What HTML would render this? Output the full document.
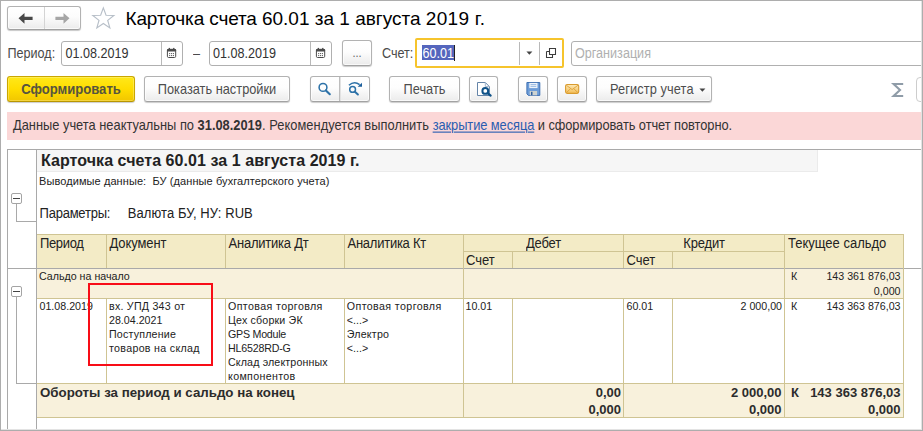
<!DOCTYPE html>
<html lang="ru">
<head>
<meta charset="utf-8">
<title>Карточка счета 60.01</title>
<style>
*{box-sizing:border-box;margin:0;padding:0}
html,body{width:923px;height:431px;overflow:hidden;background:#fff}
body{position:relative;font-family:"Liberation Sans",sans-serif;color:#333;font-size:13px}
.a{position:absolute;white-space:pre}
.frame{position:absolute;left:0;top:0;width:923px;height:431px;border:1px solid #adadad;pointer-events:none;z-index:50}
/* buttons */
.btn{position:absolute;height:26px;top:76px;border:1px solid #b2b2b2;border-bottom-color:#a2a2a2;border-radius:3px;background:linear-gradient(#ffffff 0%,#fdfdfd 45%,#ebebeb 100%);box-shadow:0 1px 1px rgba(0,0,0,.20),inset 0 0 0 1px rgba(255,255,255,.7);color:#4d4d4d;font-size:12.8px;text-align:center;line-height:25px;white-space:pre}
.btn.y{background:linear-gradient(#ffe81a 0%,#ffdd00 50%,#f1c600 100%);border-color:#caa700;border-bottom-color:#b89600;color:#56543f;font-weight:bold;font-size:13.1px;box-shadow:0 1px 1px rgba(0,0,0,.20),inset 0 0 0 1px rgba(255,255,255,.25)}
.inp{position:absolute;top:41px;height:25px;border:1px solid #b0b0b0;border-radius:3px;background:#fff}
.lbl{position:absolute;font-size:12.6px;color:#4a4a4a;line-height:16px;white-space:pre;transform:scaleY(1.12);transform-origin:0 12.4px}
.vd{position:absolute;width:1px;background:#b9b9b9}
/* sheet */
.t8{position:absolute;font-size:10.67px;line-height:14px;color:#222;white-space:pre}
.t10{position:absolute;font-size:13px;line-height:16px;color:#222;white-space:pre;transform:scaleY(1.1);transform-origin:0 12.5px}
.t10.b{transform:none}
.hl{position:absolute;height:1px;background:#cfc493}
.vl{position:absolute;width:1px;background:#cfc493}
.gl{position:absolute;background:#a9a9a9}
.bt{display:inline-block;line-height:25px;transform:scaleY(1.12);transform-origin:50% 16.9px}
</style>
</head>
<body>
<!-- ===== header / nav ===== -->
<div class="a" style="left:7px;top:6px;width:74px;height:24px;border:1px solid #b2b2b2;border-bottom-color:#a0a0a0;border-radius:3px;background:linear-gradient(#fff,#fcfcfc 45%,#ebebeb);box-shadow:0 1px 1px rgba(0,0,0,.22),inset 0 0 0 1px rgba(255,255,255,.7)"></div>
<div class="vd" style="left:44px;top:7px;height:22px;background:#d4d4d4"></div>
<svg class="a" style="left:17px;top:11px" width="18" height="14" viewBox="0 0 18 14"><path d="M1.5 7.3 L7.5 1.9 L7.5 5.7 L15.6 5.7 L15.6 8.9 L7.5 8.9 L7.5 12.7 Z" fill="#484848"/></svg>
<svg class="a" style="left:53px;top:11px" width="18" height="14" viewBox="0 0 18 14"><path d="M16.5 7.3 L10.5 1.9 L10.5 5.7 L2.4 5.7 L2.4 8.9 L10.5 8.9 L10.5 12.7 Z" fill="#a6a6a6"/></svg>
<svg class="a" style="left:88px;top:4px" width="30" height="28" viewBox="88 4 30 28"><path d="M103.35 7.90 L106.05 15.23 L113.86 15.54 L107.72 20.37 L109.85 27.89 L103.35 23.55 L96.85 27.89 L98.98 20.37 L92.84 15.54 L100.65 15.23 Z" fill="#fff" stroke="#b7bfc8" stroke-width="1.15" stroke-linejoin="miter"/></svg>
<div class="a" id="title" style="left:125.5px;top:7px;font-size:19px;line-height:24px;color:#000"><span style="letter-spacing:-.13px">Карточка счета </span>60.01 за 1 августа <span style="letter-spacing:.28px">2019 г.</span></div>

<!-- ===== row 2 : period / account ===== -->
<div class="lbl" style="left:7.5px;top:46px">Период:</div>
<div class="inp" style="left:61px;width:122px"></div>
<div class="vd" style="left:161px;top:42px;height:23px"></div>
<div class="lbl" style="left:65.4px;top:46px;color:#333">01.08.2019</div>
<svg class="a cal" style="left:164px;top:45px" width="16" height="16" viewBox="164 45 16 16"><rect x="167.4" y="49.3" width="8.3" height="8.2" rx="1.2" fill="#fff" stroke="#4c4c4c" stroke-width="1"/><rect x="167" y="48.9" width="9.1" height="2.7" rx="0.8" fill="#4c4c4c"/><rect x="168.7" y="47.9" width="1.3" height="1.6" fill="#4c4c4c"/><rect x="173.1" y="47.9" width="1.3" height="1.6" fill="#4c4c4c"/><g fill="#666"><rect x="169.1" y="53" width="1.1" height="1.1"/><rect x="171" y="53" width="1.1" height="1.1"/><rect x="172.9" y="53" width="1.1" height="1.1"/><rect x="169.1" y="55" width="1.1" height="1.1"/><rect x="171" y="55" width="1.1" height="1.1"/><rect x="172.9" y="55" width="1.1" height="1.1"/></g></svg>
<div class="lbl" style="left:193px;top:46px">–</div>
<div class="inp" style="left:209px;width:123px"></div>
<div class="vd" style="left:310px;top:42px;height:23px"></div>
<div class="lbl" style="left:213px;top:46px;color:#333">01.08.2019</div>
<svg class="a cal" style="left:313px;top:45px" width="16" height="16" viewBox="164 45 16 16"><rect x="167.4" y="49.3" width="8.3" height="8.2" rx="1.2" fill="#fff" stroke="#4c4c4c" stroke-width="1"/><rect x="167" y="48.9" width="9.1" height="2.7" rx="0.8" fill="#4c4c4c"/><rect x="168.7" y="47.9" width="1.3" height="1.6" fill="#4c4c4c"/><rect x="173.1" y="47.9" width="1.3" height="1.6" fill="#4c4c4c"/><g fill="#666"><rect x="169.1" y="53" width="1.1" height="1.1"/><rect x="171" y="53" width="1.1" height="1.1"/><rect x="172.9" y="53" width="1.1" height="1.1"/><rect x="169.1" y="55" width="1.1" height="1.1"/><rect x="171" y="55" width="1.1" height="1.1"/><rect x="172.9" y="55" width="1.1" height="1.1"/></g></svg>
<div class="btn" style="left:342px;top:40px;width:30px;height:26px;line-height:25px;font-size:11px;color:#666"><span class="bt">...</span></div>
<div class="lbl" style="left:382px;top:46px">Счет:</div>
<div class="a" style="left:415px;top:38px;width:149px;height:30px;border:2px solid #f6c42c;border-radius:2px;background:#fff"></div>
<div class="a" style="left:422px;top:45px;width:33px;height:15px;background:#5566bd"></div>
<div class="lbl" style="left:422.5px;top:46px;color:#fff">60.01</div>
<div class="a" style="left:454px;top:45px;width:1px;height:16px;background:#222"></div>
<div class="vd" style="left:519px;top:42px;height:23px"></div>
<div class="vd" style="left:539px;top:42px;height:23px"></div>
<svg class="a" style="left:525.5px;top:51px" width="7" height="5" viewBox="0 0 7 5"><path d="M0.4 0.6 L6.4 0.6 L3.4 3.7 Z" fill="#444"/></svg>
<svg class="a" style="left:545px;top:47px" width="12" height="12" viewBox="0 0 12 12"><path d="M4.5 1.5 H10.5 V7.5 H4.5 Z M1.5 4.5 H4.5 M1.5 4.5 V10.5 H7.5 V7.5" fill="none" stroke="#3c3c3c" stroke-width="1.05"/></svg>
<div class="inp" style="left:571px;width:360px"></div>
<div class="lbl" style="left:575px;top:46px;color:#b0b0b0">Организация</div>

<!-- ===== row 3 : toolbar ===== -->
<div class="btn y" style="left:7px;width:128px"><span class="bt">Сформировать</span></div>
<div class="btn" style="left:144px;width:146px"><span class="bt">Показать настройки</span></div>
<div class="btn" style="left:310px;width:60px"></div>
<div class="vd" style="left:339px;top:77px;height:24px;background:#bdbdbd"></div><div class="vd" style="left:340px;top:77px;height:24px;background:#e2e2e2"></div>
<svg class="a" style="left:312px;top:78px" width="26" height="22" viewBox="312 78 26 22"><circle cx="323" cy="87.4" r="3.9" fill="none" stroke="#2d72a8" stroke-width="1.55"/><path d="M325.9 90.4 L329.8 94.2" stroke="#2d72a8" stroke-width="2.1" stroke-linecap="round"/></svg>
<svg class="a" style="left:342px;top:78px" width="26" height="22" viewBox="342 78 26 22"><circle cx="352.6" cy="89.4" r="2.9" fill="none" stroke="#2d72a8" stroke-width="1.5"/><path d="M354.9 91.7 L357.9 94.5" stroke="#2d72a8" stroke-width="2" stroke-linecap="round"/><path d="M348.9 85.3 Q354.2 80.6 359.6 84.6" fill="none" stroke="#2d72a8" stroke-width="1.5"/><path d="M357.6 86.8 L362 86.8 L362 82.8 Z" fill="#1c5f9c"/></svg>
<div class="btn" style="left:389px;width:71px"><span class="bt">Печать</span></div>
<div class="btn" style="left:469px;width:29px"></div>
<svg class="a" style="left:474px;top:79px" width="22" height="22" viewBox="474 79 22 22"><path d="M477.5 82.5 H485.3 L489.4 86.6 V95.5 H477.5 Z" fill="#fff" stroke="#6484a8" stroke-width="1"/><path d="M485.3 82.5 V86.6 H489.4" fill="none" stroke="#9fb4cc" stroke-width="1"/><circle cx="485.3" cy="90.9" r="2.9" fill="#fff" stroke="#0f5288" stroke-width="2"/><path d="M487.7 93.2 L490.6 95.6" stroke="#0f5288" stroke-width="2.3" stroke-linecap="round"/></svg>
<div class="btn" style="left:518px;width:30px"></div>
<svg class="a" style="left:524px;top:80px" width="20" height="20" viewBox="524 80 20 20"><path d="M526.9 82.5 H539.8 V95.4 H528.4 L526.9 93.9 Z" fill="#6c9cd8" stroke="#3f70b2" stroke-width="1"/><rect x="529.3" y="82.9" width="8.2" height="5.2" fill="#eef4fb"/><path d="M530.5 84.6 H536.3 M530.5 86.4 H536.3" stroke="#8fb3e0" stroke-width="0.9"/><rect x="529.7" y="91" width="7.4" height="4.3" fill="#cdd2d0"/><rect x="531" y="91.8" width="1.5" height="3.4" fill="#2f5f9e"/></svg>
<div class="btn" style="left:557px;width:30px"></div>
<svg class="a" style="left:563px;top:82px" width="18" height="14" viewBox="563 82 18 14"><defs><linearGradient id="mg" x1="0" y1="0" x2="0" y2="1"><stop offset="0" stop-color="#fde9b8"/><stop offset="1" stop-color="#f3bd55"/></linearGradient></defs><rect x="565.6" y="84.5" width="13.1" height="8.9" rx="1.6" fill="url(#mg)" stroke="#d99b2e" stroke-width="1.1"/><path d="M566.3 85.2 L572.15 89.6 L578 85.2 M566.3 92.8 L570.6 88.6 M578 92.8 L573.7 88.6" fill="none" stroke="#dca23a" stroke-width="0.9"/></svg>
<div class="btn" style="left:596px;width:116px;text-align:left;padding-left:13px"><span class="bt" style="letter-spacing:.09px">Регистр учета</span></div>
<svg class="a" style="left:699px;top:88px" width="7" height="5" viewBox="0 0 7 5"><path d="M0.4 0.6 L6.4 0.6 L3.4 3.7 Z" fill="#444"/></svg>
<svg class="a" style="left:888px;top:80px" width="20" height="20" viewBox="888 80 20 20"><polyline points="903.2,84 893.6,84 900,90 893.6,96 903.2,96" fill="none" stroke="#8f9ca8" stroke-width="2.1" stroke-linejoin="miter"/></svg>
<div class="a" style="left:916px;top:77px;width:20px;height:25px;border:1px solid #cdcdcd;border-radius:4px;background:#fff"></div>

<!-- ===== pink banner ===== -->
<div class="a" style="left:7px;top:112px;width:916px;height:28px;background:#fbd7d7"></div>
<div class="a" id="warn" style="left:13px;top:119px;font-size:12.85px;line-height:16px;color:#333;transform:translateY(-.5px) scaleY(1.12);transform-origin:0 12.45px">Данные учета неактуальны по <b>31.08.2019</b><span style="letter-spacing:.06px">. Рекомендуется выполнить </span><span style="color:#2a5db0;text-decoration:underline;letter-spacing:-.07px">закрытие месяца</span><span style="letter-spacing:-.06px"> и сформировать отчет повторно.</span></div>

<!-- ===== spreadsheet ===== -->
<div class="gl" style="left:7px;top:149px;width:916px;height:1px"></div>
<div class="gl" style="left:7px;top:149px;width:1px;height:282px"></div>
<div class="gl" style="left:36px;top:149px;width:1px;height:282px"></div>
<div class="gl" style="left:7px;top:268px;width:916px;height:1px"></div>

<div class="a" style="left:37px;top:150px;width:781px;height:22px;background:#f6f6f6;border-right:1px solid #ebebeb;border-bottom:1px solid #ebebeb"></div>
<div class="a" id="stitle" style="left:41px;top:151px;font-size:16px;line-height:20px;font-weight:bold;color:#222;letter-spacing:.06px">Карточка счета 60.01 за 1 августа 2019 г.</div>
<div class="t8" style="left:39px;top:174px;font-size:11px;letter-spacing:.085px">Выводимые данные:  БУ (данные бухгалтерского учета)</div>
<div class="t10" style="left:39.6px;top:206px;letter-spacing:-0.24px">Параметры:</div>
<div class="t10" style="left:127.8px;top:206px;letter-spacing:.08px">Валюта БУ, НУ: RUB</div>

<!-- group tree -->
<div class="gl" style="left:16px;top:203px;width:1px;height:18px"></div>
<div class="gl" style="left:16px;top:221px;width:20px;height:1px"></div>
<div class="a" style="left:11px;top:193px;width:11px;height:11px;border:1px solid #a4a4a4;border-radius:2px;background:#fff"></div>
<div class="a" style="left:13px;top:198px;width:7px;height:1px;background:#444"></div>
<div class="gl" style="left:16px;top:296px;width:1px;height:87px"></div>
<div class="gl" style="left:16px;top:383px;width:20px;height:1px"></div>
<div class="a" style="left:11px;top:286px;width:11px;height:11px;border:1px solid #a4a4a4;border-radius:2px;background:#fff"></div>
<div class="a" style="left:13px;top:291px;width:7px;height:1px;background:#444"></div>

<!-- header block -->
<div class="a" style="left:37px;top:235px;width:867px;height:33px;background:#f3ebc6"></div>
<div class="a" style="left:37px;top:269px;width:867px;height:29px;background:#f8f1dc"></div>
<div class="a" style="left:37px;top:384px;width:867px;height:33px;background:#f8f1dc"></div>

<div class="hl" style="left:37px;top:234px;width:867px"></div>
<div class="hl" style="left:463px;top:251px;width:322px"></div>
<div class="hl" style="left:37px;top:298px;width:867px"></div>
<div class="hl" style="left:37px;top:383px;width:867px"></div>
<div class="hl" style="left:37px;top:417px;width:867px"></div>

<div class="vl" style="left:106px;top:235px;height:33px"></div>
<div class="vl" style="left:225px;top:235px;height:33px"></div>
<div class="vl" style="left:344px;top:235px;height:33px"></div>
<div class="vl" style="left:463px;top:235px;height:183px"></div>
<div class="vl" style="left:512px;top:252px;height:16px"></div>
<div class="vl" style="left:623px;top:235px;height:33px"></div>
<div class="vl" style="left:672px;top:252px;height:16px"></div>
<div class="vl" style="left:784px;top:235px;height:183px"></div>
<div class="vl" style="left:903px;top:235px;height:183px"></div>

<div class="vl" style="left:106px;top:299px;height:84px"></div>
<div class="vl" style="left:225px;top:299px;height:84px"></div>
<div class="vl" style="left:344px;top:299px;height:84px"></div>
<div class="vl" style="left:512px;top:299px;height:84px"></div>
<div class="vl" style="left:623px;top:299px;height:119px"></div>
<div class="vl" style="left:672px;top:299px;height:84px"></div>

<!-- header texts -->
<div class="t10" style="left:40px;top:236px;letter-spacing:-0.35px">Период</div>
<div class="t10" style="left:109.5px;top:236px;letter-spacing:-0.1px">Документ</div>
<div class="t10" style="left:228.5px;top:236px;letter-spacing:-0.22px">Аналитика Дт</div>
<div class="t10" style="left:347.5px;top:236px;letter-spacing:-0.25px">Аналитика Кт</div>
<div class="t10" style="left:464px;top:236px;width:159px;text-align:center;letter-spacing:-0.2px">Дебет</div>
<div class="t10" style="left:624px;top:236px;width:160px;text-align:center;letter-spacing:-0.18px">Кредит</div>
<div class="t10" style="left:788px;top:236px">Текущее сальдо</div>
<div class="t10" style="left:466px;top:253px">Счет</div>
<div class="t10" style="left:626.5px;top:253px">Счет</div>

<!-- saldo row -->
<div class="t8" style="left:39px;top:269px">Сальдо на начало</div>
<div class="t8" style="left:791px;top:269px">К</div>
<div class="t8" style="left:785px;top:269px;width:115.5px;text-align:right">143 361 876,03</div>
<div class="t8" style="left:785px;top:284px;width:115.5px;text-align:right">0,000</div>

<!-- data row -->
<div class="t8" style="left:39.5px;top:299px">01.08.2019</div>
<div class="t8" style="left:109px;top:299px"><span style="letter-spacing:.24px">вх. УПД 343 от</span>
28.04.2021
<span style="letter-spacing:.19px">Поступление</span>
<span style="letter-spacing:.31px">товаров на склад</span></div>
<div class="t8" style="left:228px;top:299px"><span style="letter-spacing:.39px">Оптовая торговля</span>
<span style="letter-spacing:.17px">Цех сборки ЭК</span>
<span style="letter-spacing:-.24px">GPS Module</span>
<span style="letter-spacing:-.19px">HL6528RD-G</span>
<span style="letter-spacing:.14px">Склад электронных</span>
<span style="letter-spacing:.35px">компонентов</span></div>
<div class="t8" style="left:346.8px;top:299px"><span style="letter-spacing:.39px">Оптовая торговля</span>
&lt;...&gt;
<span style="letter-spacing:.2px">Электро</span>
&lt;...&gt;</div>
<div class="t8" style="left:465.5px;top:299px">10.01</div>
<div class="t8" style="left:626.5px;top:299px">60.01</div>
<div class="t8" style="left:673px;top:299px;width:109px;text-align:right">2 000,00</div>
<div class="t8" style="left:791px;top:299px">К</div>
<div class="t8" style="left:785px;top:299px;width:115.5px;text-align:right">143 363 876,03</div>

<!-- totals row -->
<div class="t10 b" style="left:40px;top:385px;font-weight:bold;color:#2c2c2c;font-size:13.3px">Обороты за период и сальдо на конец</div>
<div class="t10 b" style="left:464px;top:385px;width:157px;text-align:right;font-weight:bold;color:#2c2c2c">0,00</div>
<div class="t10 b" style="left:464px;top:402px;width:157px;text-align:right;font-weight:bold;color:#2c2c2c">0,000</div>
<div class="t10 b" style="left:624px;top:385px;width:157.5px;text-align:right;font-weight:bold;color:#2c2c2c">2 000,00</div>
<div class="t10 b" style="left:624px;top:402px;width:157.5px;text-align:right;font-weight:bold;color:#2c2c2c">0,000</div>
<div class="t10 b" style="left:791px;top:385px;font-weight:bold;color:#2c2c2c">К</div>
<div class="t10 b" style="left:785px;top:385px;width:115.5px;text-align:right;font-weight:bold;color:#2c2c2c">143 363 876,03</div>
<div class="t10 b" style="left:785px;top:402px;width:115.5px;text-align:right;font-weight:bold;color:#2c2c2c">0,000</div>

<!-- red highlight -->
<div class="a" style="left:88px;top:283px;width:125px;height:83px;border:2px solid #f80d17"></div>

<div class="a" style="left:1px;top:1px;width:921px;height:429px;border-right:1px solid #e3e3e3;border-bottom:1px solid #e3e3e3;z-index:49"></div>
<div class="frame"></div>
</body>
</html>
